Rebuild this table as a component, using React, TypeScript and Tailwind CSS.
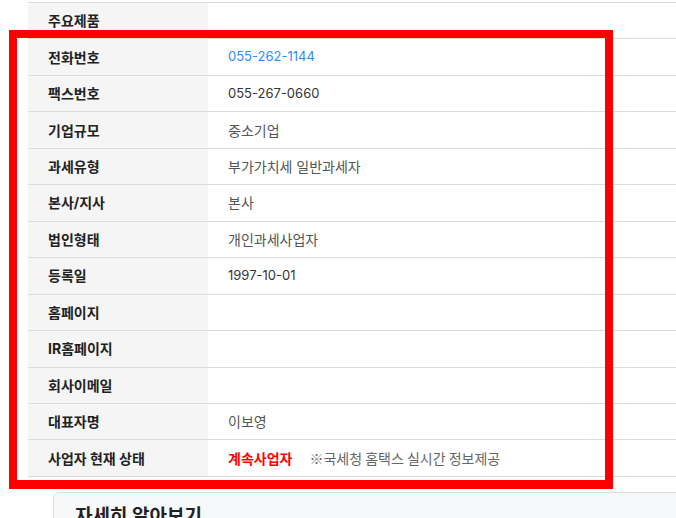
import React from 'react';

type Row = { label: string; value?: React.ReactNode };

const font = { fontFamily: '"Inter", "Noto Sans CJK KR", sans-serif' };
const cjk = { fontFamily: '"Noto Sans CJK KR", sans-serif' };

const rows: Row[] = [
    { label: '주요제품' },
    { label: '전화번호', value: <span className="text-[13px] text-[#2f8cf0]">055-262-1144</span> },
    { label: '팩스번호', value: <span className="text-[13px] text-[#333]">055-267-0660</span> },
    { label: '기업규모', value: '중소기업' },
    { label: '과세유형', value: '부가가치세 일반과세자' },
    { label: '본사/지사', value: '본사' },
    { label: '법인형태', value: '개인과세사업자' },
    { label: '등록일', value: <span className="text-[13px] text-[#333]">1997-10-01</span> },
    { label: '홈페이지' },
    { label: 'IR홈페이지' },
    { label: '회사이메일' },
    { label: '대표자명', value: '이보영' },
    {
        label: '사업자 현재 상태',
        value: (
            <span className="flex items-center gap-[17px]">
                <span className="font-bold text-[#ff0000]">계속사업자</span>
                <span className="text-[#666]" style={cjk}>※국세청 홈택스 실시간 정보제공</span>
            </span>
        ),
    },
];

export default function App() {
    return (
        <div className="relative w-[676px] h-[518px] overflow-hidden bg-white" style={font}>
            <div className="pt-[2px] pl-[28px]">
                <div className="border-t border-[#dcdcdc]">
                    {rows.map((row) => (
                        <div key={row.label} className="flex h-[36.46px] border-b border-[#dcdcdc] text-[14px]">
                            <div className="w-[180px] shrink-0 bg-[#f5f5f5] pl-[20px] flex items-center font-bold text-[#222]">
                                {row.label}
                            </div>
                            <div className="flex-1 pl-[20px] flex items-center text-[#555]">
                                {row.value}
                            </div>
                        </div>
                    ))}
                </div>
            </div>

            {/* 자세히 알아보기 */}
            <div className="mt-[15px] ml-[53px] w-[700px] h-[60px] rounded-md border border-[#dedede] bg-[#f7f8fa] pl-[21px] pt-[10px]">
                <h2 className="text-[19px] font-bold text-[#222]">자세히 알아보기</h2>
            </div>

            {/* highlight frame */}
            <div className="absolute left-[9px] top-[30px] w-[604px] h-[459px] border-[8px] border-b-[9px] border-[#ff0000] pointer-events-none" />
        </div>
    );
}
